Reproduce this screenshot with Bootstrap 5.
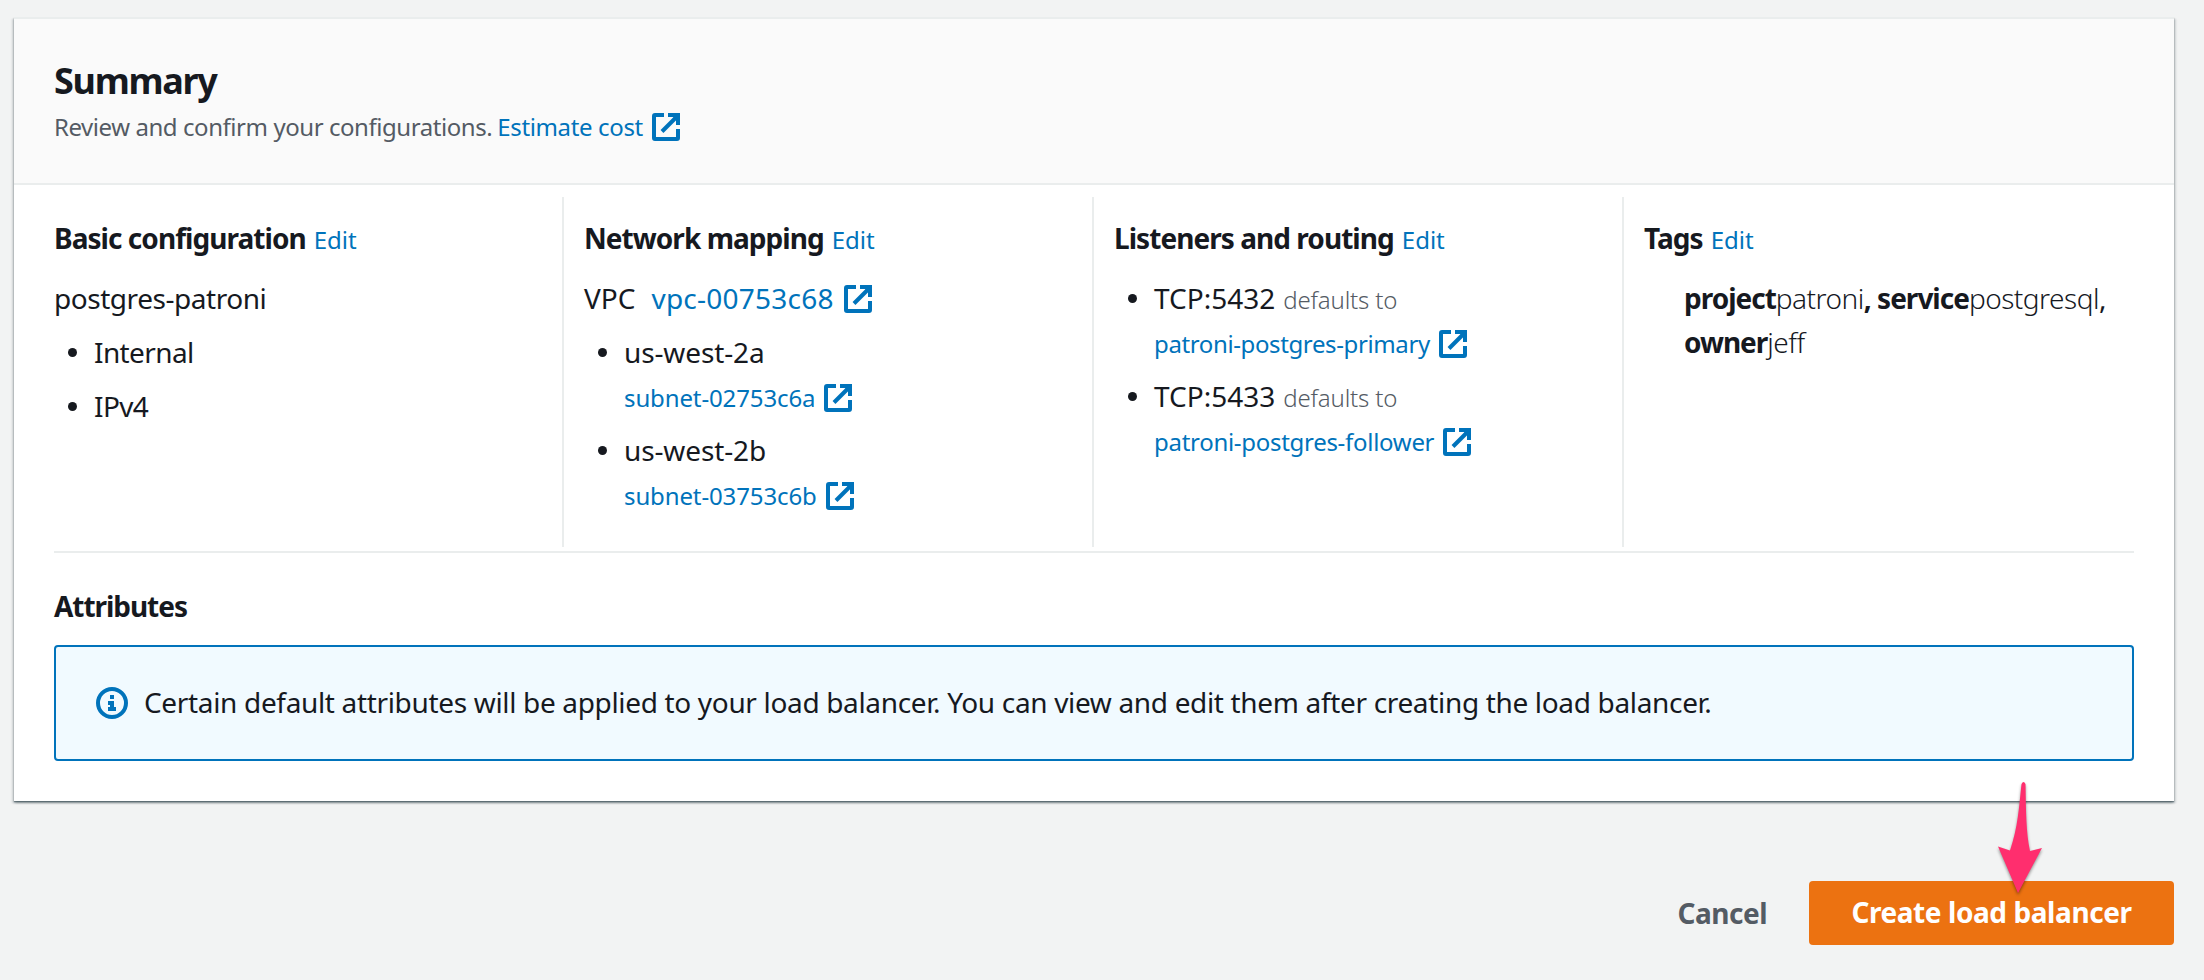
<!DOCTYPE html>
<html lang="en">
<head>
<meta charset="utf-8">
<meta name="viewport" content="width=device-width, initial-scale=1">
<title>Create load balancer</title>
<link href="https://cdn.jsdelivr.net/npm/bootstrap@5.3.0/dist/css/bootstrap.min.css" rel="stylesheet">
<style>
  body { background: #f2f3f3; color: #16191f; font-family: "Noto Sans", "Open Sans", sans-serif; font-size: 28px; line-height: 44px; overflow: hidden; }
  a { color: #0073bb; text-decoration: none; }
  .page-wrap { padding: 17px 30px 0 14px; }
  .panel { border: 0; border-top: 2px solid #eaeded; border-radius: 0; background: #fff; color: inherit; height: 784px; box-shadow: 0 2px 2px 0 rgba(0,28,36,.3), 2px 2px 2px 0 rgba(0,28,36,.13), -2px 2px 2px 0 rgba(0,28,36,.13), 0 1px 1px rgba(0,28,36,.3); }
  .panel-head { background: #fafafa; border-bottom: 2px solid #eaeded; height: 166px; padding: 40px 40px 0; }
  .panel-head h1 { font-size: 36px; line-height: 44px; letter-spacing: -1.3px; }
  .panel-head .desc { color: #545b64; letter-spacing: -.44px; }
  .line { display: flex; align-items: baseline; height: 44px; line-height: 44px; white-space: pre; }
  .sm-text { font-size: 24px; }
  .line.sm-text { padding-top: 2px; }
  .ext { width: 28px; height: 28px; flex: none; align-self: flex-start; margin: 9px 0 0 10px; fill: none; stroke: #0073bb; stroke-width: 4; }
  .sm-text .ext { margin: 8px 0 0 9px; }
  .cols { padding: 12px 0 4px; }
  .col-block { width: 530px; height: 350px; flex: none; padding: 19px 20px 0; border-right: 2px solid #eaeded; }
  .col-block:first-child { width: 550px; padding-left: 40px; }
  .col-block:last-child { border-right: 0; }
  .col-block h2 { margin: 0 0 16px; font-size: 28px; line-height: 44px; letter-spacing: -.95px; }
  .col-block h2 a { font-size: 24px; font-weight: 400; letter-spacing: 0; margin-left: 8px; }
  .bullets { list-style: none; margin: 10px 0 0; padding-left: 40px; }
  .bullets.flush { margin-top: 0; }
  .bullets li { position: relative; margin-bottom: 10px; }
  .bullets li::before { content: ""; position: absolute; left: -26px; top: 18px; width: 9px; height: 9px; border-radius: 50%; background: #16191f; }
  .attrs { margin: 0 40px; border-top: 2px solid #eaeded; padding-top: 31px; }
  .attrs h2 { font-size: 28px; line-height: 44px; letter-spacing: -1.05px; margin: 0 0 17px; }
  .notice { height: 116px; border: 2px solid #0073bb; border-radius: 4px; background: #f1faff; padding: 0 40px; margin: 0; color: inherit; }
  .notice svg { width: 32px; height: 32px; margin-right: 16px; flex: none; }
  .notice span { letter-spacing: -.335px; padding-bottom: 2px; }
  .ls-pp { letter-spacing: -.46px; }
  .ls-in { letter-spacing: -.6px; }
  .ls-id { letter-spacing: .23px; }
  .ls-est { letter-spacing: -.36px; margin-left: 5px; }
  .ls-sn { letter-spacing: -.12px; }
  .ls-tg { letter-spacing: -.38px; }
  .ls-tf { letter-spacing: -.29px; }
  .muted { color: #545b64; font-weight: 300; letter-spacing: -.16px; margin-left: 8px; }
  .tags { padding-left: 40px; }
  .tags b { letter-spacing: -1px; }
  .tags i { font-style: normal; font-weight: 300; letter-spacing: -.5px; }
  .actions { height: 64px; margin-top: 80px; }
  .btn-cancel { color: #545b64; font-weight: 700; letter-spacing: -.5px; margin-right: 42px; padding-bottom: 1px; }
  .btn-create { width: 365px; height: 64px; padding: 0; border: 0; border-radius: 4px; background: #ec7211; color: #fff; font-size: 28px; font-weight: 700; line-height: 62px; letter-spacing: -.42px; padding-bottom: 2px; }
  .pointer { position: absolute; left: 1984px; top: -104px; width: 60px; height: 120px; overflow: visible; filter: drop-shadow(0 2px 1.5px rgba(0,0,0,.4)); }
</style>
</head>
<body>
<svg class="d-none">
  <symbol id="ext" viewBox="0 0 28 28"><path d="M12 2H3Q2 2 2 3V25Q2 26 3 26H25Q26 26 26 25V16"/><path d="M10 18.500 24 4.500"/><path d="M16 2H26V12"/><path d="M20 3h5v5z" stroke="none" fill="#0073bb"/></symbol>
</svg>
<main class="page-wrap">
  <section class="card panel">
    <header class="panel-head">
      <h1 class="fw-bold mb-0">Summary</h1>
      <div class="line sm-text"><span class="desc">Review and confirm your configurations.</span><a href="#" class="ls-est">Estimate cost</a><svg class="ext"><use href="#ext"/></svg></div>
    </header>
    <div class="cols d-flex">
      <div class="col-block">
        <h2 class="line fw-bold">Basic configuration<a href="#">Edit</a></h2>
        <div class="line ls-pp">postgres-patroni</div>
        <ul class="bullets">
          <li class="line ls-in">Internal</li>
          <li class="line ls-in">IPv4</li>
        </ul>
      </div>
      <div class="col-block">
        <h2 class="line fw-bold">Network mapping<a href="#">Edit</a></h2>
        <div class="line">VPC<a href="#" class="ls-id ms-3">vpc-00753c68</a><svg class="ext"><use href="#ext"/></svg></div>
        <ul class="bullets">
          <li><div class="line ls-sn">us-west-2a</div><div class="line sm-text"><a href="#" class="ls-sn">subnet-02753c6a</a><svg class="ext"><use href="#ext"/></svg></div></li>
          <li><div class="line ls-sn">us-west-2b</div><div class="line sm-text"><a href="#" class="ls-sn">subnet-03753c6b</a><svg class="ext"><use href="#ext"/></svg></div></li>
        </ul>
      </div>
      <div class="col-block">
        <h2 class="line fw-bold">Listeners and routing<a href="#">Edit</a></h2>
        <ul class="bullets flush">
          <li><div class="line">TCP:5432<span class="sm-text muted">defaults to</span></div><div class="line sm-text"><a href="#" class="ls-tg">patroni-postgres-primary</a><svg class="ext"><use href="#ext"/></svg></div></li>
          <li><div class="line">TCP:5433<span class="sm-text muted">defaults to</span></div><div class="line sm-text"><a href="#" class="ls-tf">patroni-postgres-follower</a><svg class="ext"><use href="#ext"/></svg></div></li>
        </ul>
      </div>
      <div class="col-block">
        <h2 class="line fw-bold">Tags<a href="#">Edit</a></h2>
        <div class="tags"><div class="line"><b>project</b><i>patroni</i><b>, service</b><i>postgresql</i>,</div><div class="line"><b>owner</b><i>jeff</i></div></div>
      </div>
    </div>
    <div class="attrs">
      <h2 class="fw-bold">Attributes</h2>
      <div class="notice alert d-flex align-items-center" role="status">
        <svg viewBox="0 0 32 32"><circle cx="16" cy="16" r="14" fill="none" stroke="#0073bb" stroke-width="4"/><path fill="#0073bb" d="M14 8h4v4h-4zM12 14h6v6h2v4h-8v-4h2v-2h-2z"/></svg>
        <span>Certain default attributes will be applied to your load balancer. You can view and edit them after creating the load balancer.</span>
      </div>
    </div>
  </section>
  <footer class="actions d-flex justify-content-end align-items-center position-relative">
    <a href="#" class="btn-cancel">Cancel</a>
    <button class="btn btn-create" type="button">Create load balancer</button>
    <svg class="pointer" viewBox="0 0 60 120"><path fill="#ff2e6e" d="M37.500 7Q39.500 3 41.500 7C42 35 42 55 46 74L58 71 34 116 14 69.500 26 73.500C34 50 35 30 37.500 7Z" transform="translate(-14 0)"/></svg>
  </footer>
</main>
<script src="https://cdn.jsdelivr.net/npm/bootstrap@5.3.0/dist/js/bootstrap.bundle.min.js"></script>
</body>
</html>
